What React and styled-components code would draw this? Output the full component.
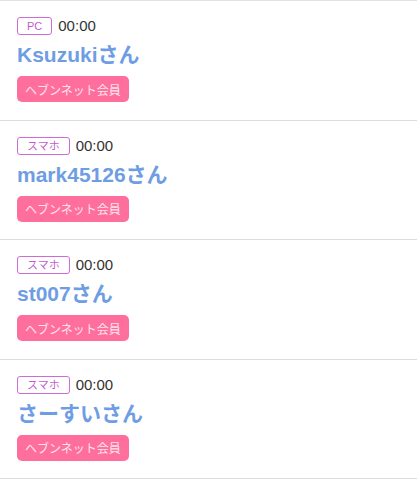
import React from "react";
import styled, { createGlobalStyle } from "styled-components";

const Global = createGlobalStyle`
  html, body { margin: 0; padding: 0; background: #fff; }
  body { font-family: "Liberation Sans", "Noto Sans CJK JP", sans-serif; }
`;

const List = styled.ul`
  list-style: none;
  margin: 0;
  padding: 0;
  border-top: 1px solid #e2e2e2;
`;

const Item = styled.li`
  box-sizing: border-box;
  height: 119.5px;
  padding: 16px 17px 0;
  border-bottom: 1px solid #dcdcdc;
`;

const Meta = styled.div`
  display: flex;
  align-items: center;
  gap: 6px;
  height: 18px;
`;

const Device = styled.span`
  box-sizing: border-box;
  height: 18px;
  padding: 0 9px;
  border: 1px solid #cf6ad6;
  border-radius: 3px;
  color: #c45ccc;
  font-size: 11px;
  line-height: 16px;
`;

const Time = styled.span`
  color: #333;
  font-size: 15px;
  line-height: 18px;
`;

const Name = styled.div`
  margin-top: 6px;
  color: #6f9de3;
  font-size: 21px;
  font-weight: bold;
  line-height: 28px;
`;

const Badge = styled.div`
  display: inline-flex;
  align-items: center;
  justify-content: center;
  margin-top: 7px;
  width: 112px;
  height: 26px;
  border-radius: 5px;
  background: #ff6f9d;
  color: #ffe3ec;
  font-size: 12px;
`;

const users = [
  { device: "PC", name: "Ksuzukiさん" },
  { device: "スマホ", name: "mark45126さん" },
  { device: "スマホ", name: "st007さん" },
  { device: "スマホ", name: "さーすいさん" },
];

export default function App() {
  return (
    <>
      <Global />
      <List>
        {users.map((u, i) => (
          <Item key={i}>
            <Meta>
              <Device>{u.device}</Device>
              <Time>00:00</Time>
            </Meta>
            <Name>{u.name}</Name>
            <Badge>ヘブンネット会員</Badge>
          </Item>
        ))}
      </List>
    </>
  );
}
